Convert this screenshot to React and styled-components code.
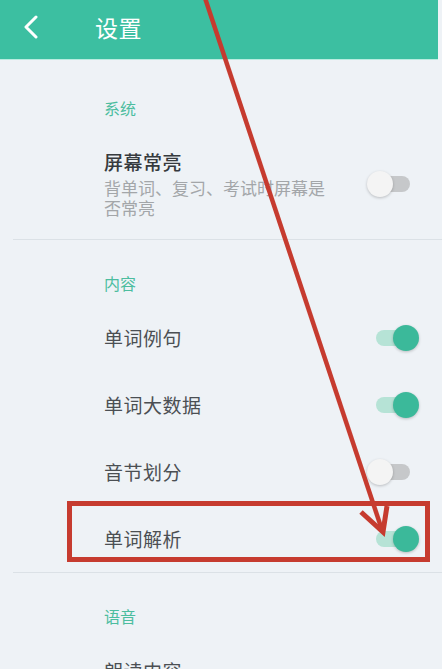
import React from "react";
import styled, { createGlobalStyle } from "styled-components";

const Global = createGlobalStyle`
  html, body { margin: 0; padding: 0; }
  body {
    background: #eef2f6;
    font-family: "Noto Sans CJK SC", "Noto Sans", sans-serif;
    overflow: hidden;
  }
`;

const Page = styled.div`
  position: relative;
  width: 442px;
  height: 669px;
  overflow: hidden;
  background: #eef2f6;
`;

const Header = styled.header`
  display: flex;
  align-items: center;
  height: 59px;
  width: calc(100% - 4px);
  background: #3cbfa1;
  border-bottom: 1px solid #b9ece0;
`;

const BackButton = styled.div`
  display: flex;
  align-items: center;
  justify-content: center;
  width: 34px;
  margin-left: 14px;
  margin-right: 47px;
  margin-top: -6px;
`;

const HeaderTitle = styled.h1`
  margin: 0;
  margin-top: -6px;
  font-size: 23px;
  font-weight: 400;
  color: #ffffff;
  letter-spacing: 0.5px;
`;

const Section = styled.section`
  padding-top: ${(p) => p.$top}px;
  border-bottom: ${(p) => (p.$divider ? "1px solid #dbe1e6" : "none")};
  margin-left: 13px;
`;

const SectionTitle = styled.div`
  padding-left: 91px;
  font-size: 16px;
  line-height: 22px;
  color: #4cbd9f;
  margin-bottom: 10px;
`;

const Row = styled.div`
  display: flex;
  align-items: center;
  justify-content: space-between;
  min-height: ${(p) => p.$h || 67}px;
  padding: ${(p) => (p.$pad ? "20px 23px 21px 91px" : "0 23px 0 91px")};
  box-sizing: border-box;
`;

const TextCol = styled.div`
  display: flex;
  flex-direction: column;
`;

const RowTitle = styled.div`
  font-size: 19px;
  line-height: 26px;
  color: ${(p) => (p.$strong ? "#363a3e" : "#4b4f53")};
  font-weight: ${(p) => (p.$strong ? 500 : 400)};
  letter-spacing: 0.5px;
`;

const RowSub = styled.div`
  font-size: 17px;
  line-height: 20px;
  color: #a3a6a9;
  max-width: 230px;
  margin-top: 3px;
`;

const ToggleWrap = styled.div`
  position: relative;
  width: 52px;
  height: 26px;
  flex-shrink: 0;
`;

const Track = styled.div`
  position: absolute;
  left: 9px;
  top: 5px;
  width: 34px;
  height: 16px;
  border-radius: 8px;
  background: ${(p) => (p.$on ? "#b6e3d6" : "#c6c8ca")};
`;

const Thumb = styled.div`
  position: absolute;
  top: 0;
  left: ${(p) => (p.$on ? "26px" : "0")};
  width: 26px;
  height: 26px;
  border-radius: 50%;
  background: ${(p) => (p.$on ? "#3bb99a" : "#f4f4f4")};
  box-shadow: 0 1px 3px rgba(0, 0, 0, 0.22);
`;

const Highlight = styled.div`
  position: absolute;
  left: 67px;
  top: 501px;
  width: 363px;
  height: 61px;
  box-sizing: border-box;
  border: 5px solid #c63b2f;
  pointer-events: none;
`;

const ArrowLayer = styled.svg`
  position: absolute;
  left: 0;
  top: 0;
  pointer-events: none;
`;

function Toggle({ on }) {
  return (
    <ToggleWrap>
      <Track $on={on} />
      <Thumb $on={on} />
    </ToggleWrap>
  );
}

export default function App() {
  return (
    <>
      <Global />
      <Page>
        <Header>
          <BackButton>
            <svg width="16" height="24" viewBox="0 0 16 24">
              <polyline
                points="13,2 3,12 13,22"
                fill="none"
                stroke="#ffffff"
                strokeWidth="3"
                strokeLinecap="round"
                strokeLinejoin="round"
              />
            </svg>
          </BackButton>
          <HeaderTitle>设置</HeaderTitle>
        </Header>

        <Section $top={37} $divider>
          <SectionTitle>系统</SectionTitle>
          <Row $pad>
            <TextCol>
              <RowTitle $strong>屏幕常亮</RowTitle>
              <RowSub>背单词、复习、考试时屏幕是否常亮</RowSub>
            </TextCol>
            <Toggle on={false} />
          </Row>
        </Section>

        <Section $top={32} $divider>
          <SectionTitle>内容</SectionTitle>
          <Row>
            <RowTitle>单词例句</RowTitle>
            <Toggle on />
          </Row>
          <Row>
            <RowTitle>单词大数据</RowTitle>
            <Toggle on />
          </Row>
          <Row>
            <RowTitle>音节划分</RowTitle>
            <Toggle on={false} />
          </Row>
          <Row>
            <RowTitle>单词解析</RowTitle>
            <Toggle on />
          </Row>
        </Section>

        <Section $top={32}>
          <SectionTitle>语音</SectionTitle>
          <Row>
            <RowTitle>朗读内容</RowTitle>
          </Row>
        </Section>

        <Highlight />
        <ArrowLayer width="442" height="669" viewBox="0 0 442 669">
          <line
            x1="205"
            y1="-2"
            x2="382"
            y2="530"
            stroke="#c63b2f"
            strokeWidth="4.5"
          />
          <polyline
            points="361,512 383,532 387,506"
            fill="none"
            stroke="#c63b2f"
            strokeWidth="5"
            strokeLinejoin="miter"
          />
        </ArrowLayer>
      </Page>
    </>
  );
}
